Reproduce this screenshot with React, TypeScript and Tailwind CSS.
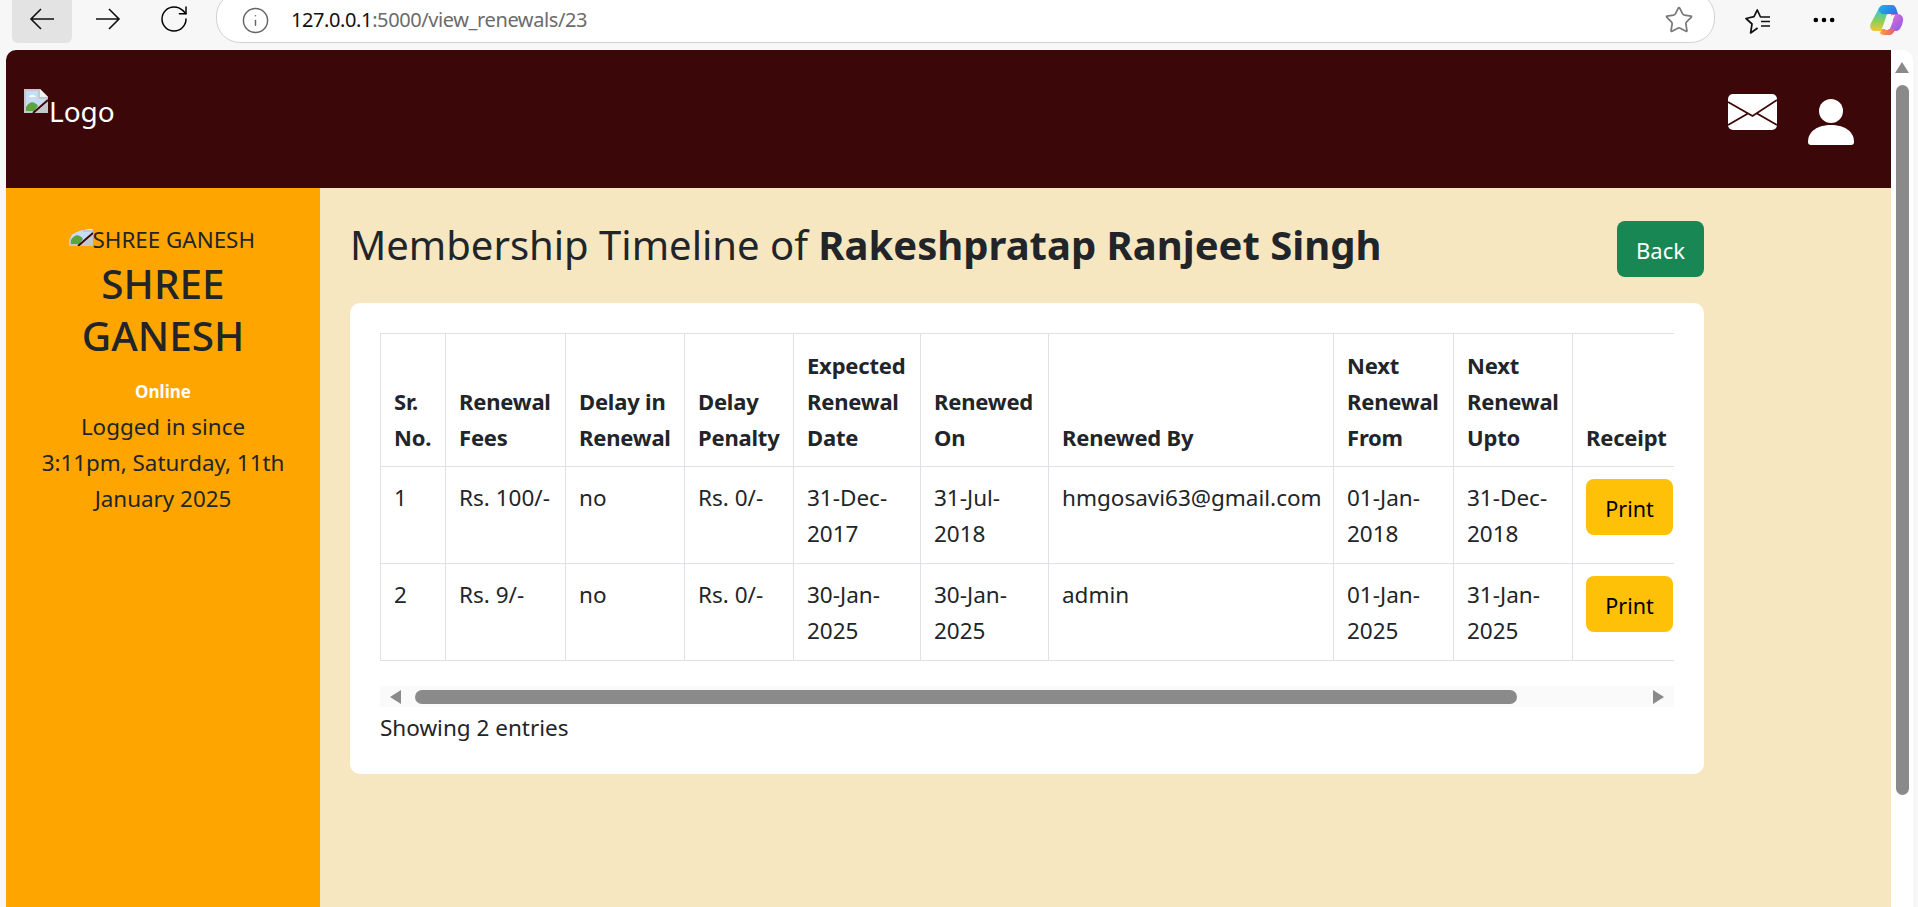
import { Ellipsis, Info, RotateCw, Star } from 'lucide-react'

const rows = [
  ['1', 'Rs. 100/-', 'no', 'Rs. 0/-', '31-Dec-2017', '31-Jul-2018', 'hmgosavi63@gmail.com', '01-Jan-2018', '31-Dec-2018'],
  ['2', 'Rs. 9/-', 'no', 'Rs. 0/-', '30-Jan-2025', '30-Jan-2025', 'admin', '01-Jan-2025', '31-Jan-2025'],
]

const heads = [
  'Sr. No.',
  'Renewal Fees',
  'Delay in Renewal',
  'Delay Penalty',
  'Expected Renewal Date',
  'Renewed On',
  'Renewed By',
  'Next Renewal From',
  'Next Renewal Upto',
  'Receipt',
]

const widths = ['w-[65px]', 'w-[120px]', 'w-[119px]', 'w-[109px]', 'w-[127px]', 'w-[128px]', 'w-[285px]', 'w-[120px]', 'w-[119px]', 'w-[113px]']

const BrokenImage = () => (
  <svg width="24" height="24" viewBox="0 0 24 24" className="shrink-0">
    <path d="M0 0h16l8 8v16H0z" fill="#c4c8cd" />
    <path d="M16 0v8h8z" fill="#f1f1f1" />
    <path d="M2 2h12v8h8v10H2z" fill="#c8dcf6" />
    <path d="M5 8c1-3 5-3 7 0z" fill="#fff" />
    <path d="M2 22v-4c4-6 8-6 12-1l-4 5z" fill="#5aa63c" />
    <path d="M11 24 24 13v11z" fill="#c4c8cd" />
    <path d="M9 24 24 11" stroke="#3b0708" strokeWidth="2" />
  </svg>
)

const Copilot = () => (
  <svg width="34" height="31" viewBox="0 0 34 31">
    <defs>
      <linearGradient id="cpA" x1="0" y1="0" x2="1" y2="1">
        <stop offset="0" stopColor="#1fb6e8" />
        <stop offset="0.55" stopColor="#2f7bea" />
        <stop offset="1" stopColor="#1e5bd0" />
      </linearGradient>
      <linearGradient id="cpB" x1="0" y1="0" x2="0" y2="1">
        <stop offset="0" stopColor="#3fc4d8" />
        <stop offset="0.55" stopColor="#8fd14f" />
        <stop offset="1" stopColor="#f5c33b" />
      </linearGradient>
      <linearGradient id="cpC" x1="0" y1="0" x2="1" y2="1">
        <stop offset="0" stopColor="#e56fd0" />
        <stop offset="1" stopColor="#8a5be8" />
      </linearGradient>
      <linearGradient id="cpD" x1="0" y1="0" x2="1" y2="0">
        <stop offset="0" stopColor="#f7a13b" />
        <stop offset="1" stopColor="#ee5a6f" />
      </linearGradient>
    </defs>
    <path d="M8 5c1-3 3-5 6-5h8c2 0 3 1 4 3l2 6h-9c-3 0-4 1-5 4l-2 6z" fill="url(#cpA)" />
    <path d="M8 5 1 18c-2 4 0 8 4 8h6l3-8 3-9H12z" fill="url(#cpB)" />
    <path d="M21 9h7c3 0 6 3 5 7-1 5-3 9-6 10h-8l4-10z" fill="url(#cpC)" />
    <path d="M12 24h13c-1 4-3 6-6 6h-5c-2 0-3-1-4-2z" fill="url(#cpD)" />
    <path d="M22 10h3l-7 15h-3z" fill="#fdf7f2" />
  </svg>
)

export default function App() {
  return (
    <div className="h-screen overflow-hidden bg-[#f7f7f7] flex flex-col font-['Noto_Sans',sans-serif] text-[#212529]">
      <div className="h-[50px] shrink-0 flex items-start pl-[12px]">
        <div className="w-[60px] h-[43px] bg-[#e3e3e3] rounded-b-md flex items-center justify-center pb-[5px]">
          <svg width="26" height="22" viewBox="0 0 26 22" fill="none" stroke="#111" strokeWidth="1.6">
            <path d="M25 11H2M12 1 2 11l10 10" />
          </svg>
        </div>
        <div className="w-[24px] h-[38px] ml-[24px] flex items-center justify-center">
          <svg width="26" height="22" viewBox="0 0 26 22" fill="none" stroke="#111" strokeWidth="1.6" className="shrink-0">
            <path d="M1 11h23M14 1l10 10-10 10" />
          </svg>
        </div>
        <div className="w-[32px] h-[38px] ml-[38px] flex items-center justify-center">
          <RotateCw size={32} strokeWidth={1.1} className="text-black shrink-0" />
        </div>
        <div className="w-[1499px] h-[51px] -mt-[8px] ml-[26px] pt-[5px] bg-white border border-[#d2d2d2] rounded-[24px] flex items-center">
          <Info size={29} strokeWidth={1.2} className="ml-[24px] text-[#666]" />
          <span className="ml-[21px] text-[20px] tracking-[-0.02em] text-[#111]">
            127.0.0.1<span className="text-[#6b6b6b]">:5000/view_renewals/23</span>
          </span>
          <Star size={30} strokeWidth={1.4} className="ml-auto mr-[20px] text-[#7a7a7a]" />
        </div>
        <svg width="28" height="26" viewBox="0 0 28 26" fill="none" stroke="#111" strokeWidth="1.7" strokeLinejoin="round" className="ml-[30px] mt-[9px] shrink-0">
          <path d="M25 8h-9.5L12.3 1 9 7.7 1 9.5 7 15 5.6 24l7-5" />
          <path d="M16 12.5h9M16 17h9" />
        </svg>
        <Ellipsis size={28} strokeWidth={2} className="ml-[37px] mt-[6px] text-black shrink-0" />
        <div className="ml-[32px] mt-[5px] shrink-0">
          <Copilot />
        </div>
      </div>

      <div className="flex-1 min-h-0 flex ml-[6px] mr-[5px]">
        <div className="flex-1 min-w-0 flex flex-col rounded-tl-[10px] overflow-hidden">
          <header className="h-[138px] shrink-0 bg-[#3b0708] flex items-start text-white">
            <div className="mt-[39px] ml-[18px] flex items-start">
              <BrokenImage />
              <span className="mt-[3px] ml-[1px] text-[28px] leading-[38px]">Logo</span>
            </div>
            <svg width="49" height="36" viewBox="0 0 49 36" className="ml-auto mt-[44px]">
              <rect width="49" height="36" rx="5" fill="#fff" />
              <path d="M0 8l24.5 14L49 6M0 31l20-11.500M49 31 29 19.500" stroke="#3b0708" strokeWidth="1.8" fill="none" />
            </svg>
            <svg width="46" height="46" viewBox="0 0 46 46" className="ml-[31px] mr-[37px] mt-[49px]">
              <circle cx="23" cy="12" r="12" fill="#fff" />
              <path d="M0 43c0-11 10-17 23-17s23 6 23 17c0 2-1 3-3 3H3c-2 0-3-1-3-3z" fill="#fff" />
            </svg>
          </header>

          <div className="flex-1 min-h-0 flex">
            <aside className="w-[314px] shrink-0 bg-[#ffa500] flex flex-col items-center pt-[41px] text-center">
              <div className="w-[189px] h-[29px] overflow-hidden flex items-start rounded-[24px/12px] text-[22.4px] leading-[30px] whitespace-nowrap">
                <div className="-mt-[7px] shrink-0">
                  <BrokenImage />
                </div>
                <span className="-mt-[4px]">SHREE GANESH</span>
              </div>
              <h2 className="w-[220px] text-[40.5px] leading-[52px] font-medium">SHREE GANESH</h2>
              <div className="mt-[18px] text-[17px] leading-[24px] font-bold text-white">Online</div>
              <div className="mt-[5px] w-[250px] text-[22.4px] leading-[36px]">
                Logged in since 3:11pm, Saturday, 11th January 2025
              </div>
            </aside>

            <main className="flex-1 min-w-0 bg-[#f7e7c1] pl-[30px]">
              <div className="w-[1354px]">
                <div className="h-[115px] flex items-start justify-between">
                  <h1 className="mt-[33px] text-[40px] leading-[48px]">
                    Membership Timeline of <b className="font-bold">Rakeshpratap Ranjeet Singh</b>
                  </h1>
                  <button className="mt-[33px] w-[87px] h-[56px] pt-[2px] rounded-lg bg-[#198754] text-white text-[22px]">Back</button>
                </div>
                <div className="bg-white rounded-[10px] p-[30px] h-[471px]">
                  <div className="overflow-hidden">
                    <table className="table-fixed border-collapse w-[1305px] text-[22.5px] leading-[36px]">
                      <thead>
                        <tr>
                          {heads.map((h, i) => (
                            <th key={h} className={`${widths[i]} border border-[#dee2e6] px-[13px] pt-[13px] pb-[11px] text-left align-bottom text-[22px] tracking-[-0.2px] font-bold`}>
                              {h}
                            </th>
                          ))}
                        </tr>
                      </thead>
                      <tbody>
                        {rows.map((r) => (
                          <tr key={r[0]}>
                            {r.map((c, i) => (
                              <td key={i} className="border border-[#dee2e6] px-[13px] pt-[13px] pb-[11px] align-top">
                                {c}
                              </td>
                            ))}
                            <td className="border border-[#dee2e6] px-[13px] pt-[12px] pb-[12px] align-top">
                              <button className="block w-[87px] h-[56px] pt-[3px] rounded-lg bg-[#ffc107] text-black text-[21.5px]">Print</button>
                            </td>
                          </tr>
                        ))}
                      </tbody>
                    </table>
                  </div>
                  <div className="mt-[25px] h-[21px] bg-[#fafafa] flex items-center">
                    <span className="ml-[10px] w-0 h-0 border-y-[7px] border-y-transparent border-r-[11px] border-r-[#8a8a8a]" />
                    <span className="ml-[14px] w-[1102px] h-[14px] rounded-full bg-[#8a8a8a]" />
                    <span className="ml-auto mr-[10px] w-0 h-0 border-y-[7px] border-y-transparent border-l-[11px] border-l-[#8a8a8a]" />
                  </div>
                  <div className="text-[22.5px] leading-[36px] mt-[3px]">Showing 2 entries</div>
                </div>
              </div>
            </main>
          </div>
        </div>

        <div className="w-[22px] shrink-0 bg-white rounded-tr-[10px] flex flex-col items-center pt-[12px]">
          <span className="w-0 h-0 border-x-[7px] border-x-transparent border-b-[11px] border-b-[#8a8a8a]" />
          <span className="mt-[12px] w-[13px] h-[710px] rounded-full bg-[#8a8a8a]" />
        </div>
      </div>
    </div>
  )
}
